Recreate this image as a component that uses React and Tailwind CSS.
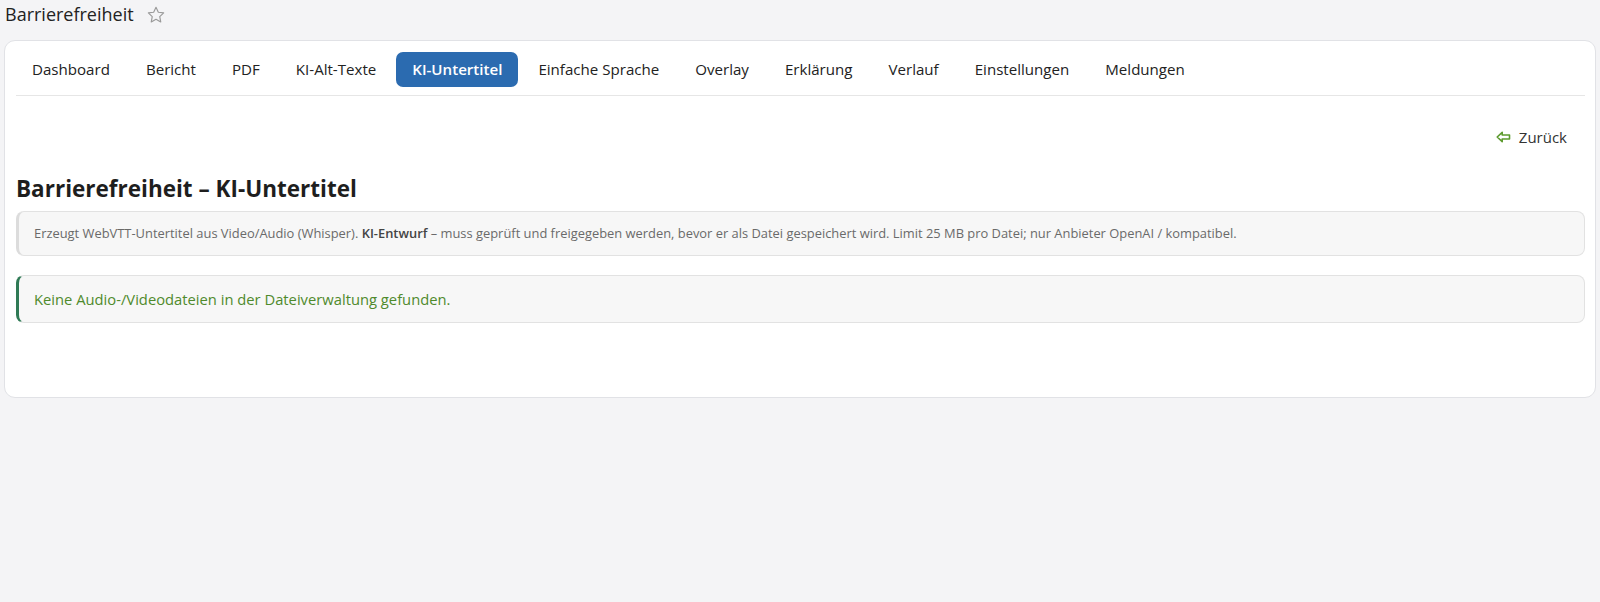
import React from "react";

const tabs = [
  "Dashboard",
  "Bericht",
  "PDF",
  "KI-Alt-Texte",
  "KI-Untertitel",
  "Einfache Sprache",
  "Overlay",
  "Erklärung",
  "Verlauf",
  "Einstellungen",
  "Meldungen",
];

function Star() {
  return (
    <svg width="20" height="20" viewBox="0 0 24 24" fill="none" stroke="#9a9a9a" strokeWidth="1.4" strokeLinejoin="round">
      <path d="M12 2.8l2.8 5.9 6.4.8-4.7 4.4 1.2 6.4L12 17.2l-5.7 3.1 1.2-6.4-4.7-4.4 6.4-.8z" />
    </svg>
  );
}

function ArrowLeft() {
  return (
    <svg width="15" height="12" viewBox="0 0 15 12" fill="none" stroke="#5d9b2f" strokeWidth="1.6" strokeLinejoin="round">
      <path d="M1.2 6L6.2 1.3V4h7.3v4H6.2v2.7z" />
    </svg>
  );
}

export default function App() {
  return (
    <div
      className="min-h-[602px] w-[1600px] bg-[#f4f4f6] text-[#222]"
      style={{ fontFamily: '"Open Sans", "Noto Sans", sans-serif' }}
    >
      <div className="flex h-[29px] items-center gap-[12px] pl-[5px]">
        <span className="text-[18px] text-[#222]">Barrierefreiheit</span>
        <Star />
      </div>
      <div className="ml-[4px] mt-[11px] w-[1592px] rounded-[11px] border border-[#e1e2e6] bg-white pb-[74px] pl-[11px] pr-[10px] pt-[11px]">
        <nav className="flex gap-[4px] border-b border-[#e6e6e6] pb-[8px]">
          {tabs.map((t) =>
            t === "KI-Untertitel" ? (
              <span
                key={t}
                className="flex h-[35px] items-center rounded-[7px] bg-[#2b6bb0] px-[16px] text-[15.1px] font-semibold text-white"
              >
                {t}
              </span>
            ) : (
              <span
                key={t}
                className="flex h-[35px] items-center px-[16px] text-[15.1px] font-medium text-[#222]"
              >
                {t}
              </span>
            )
          )}
        </nav>
        <div className="flex justify-end pr-[18px] pt-[30px]">
          <span className="flex h-[22px] items-center gap-[8px] text-[15px] text-[#333]">
            <ArrowLeft />
            Zurück
          </span>
        </div>
        <h1 className="mt-[26px] text-[22.5px] font-bold leading-[30px] text-[#1e1e1e]">
          Barrierefreiheit – KI-Untertitel
        </h1>
        <div className="mt-[7px] flex h-[45px] items-center rounded-[8px] border border-l-[3px] border-[#e2e2e2] border-l-[#dcdcdc] bg-[#f7f7f7] pl-[15px] text-[12.9px] text-[#6a6a6a]">
          <span>
            Erzeugt WebVTT-Untertitel aus Video/Audio (Whisper). <b className="font-semibold text-[#444]">KI-Entwurf</b> – muss geprüft und freigegeben werden, bevor er als Datei gespeichert wird. Limit 25 MB pro Datei; nur Anbieter OpenAI / kompatibel.
          </span>
        </div>
        <div className="mt-[19px] flex h-[48px] items-center rounded-[8px] border border-l-[3px] border-[#e2e2e2] border-l-[#2f7a55] bg-[#f7f7f7] pl-[15px] text-[14.75px] text-[#4f8a2c]">
          Keine Audio-/Videodateien in der Dateiverwaltung gefunden.
        </div>
      </div>
    </div>
  );
}
